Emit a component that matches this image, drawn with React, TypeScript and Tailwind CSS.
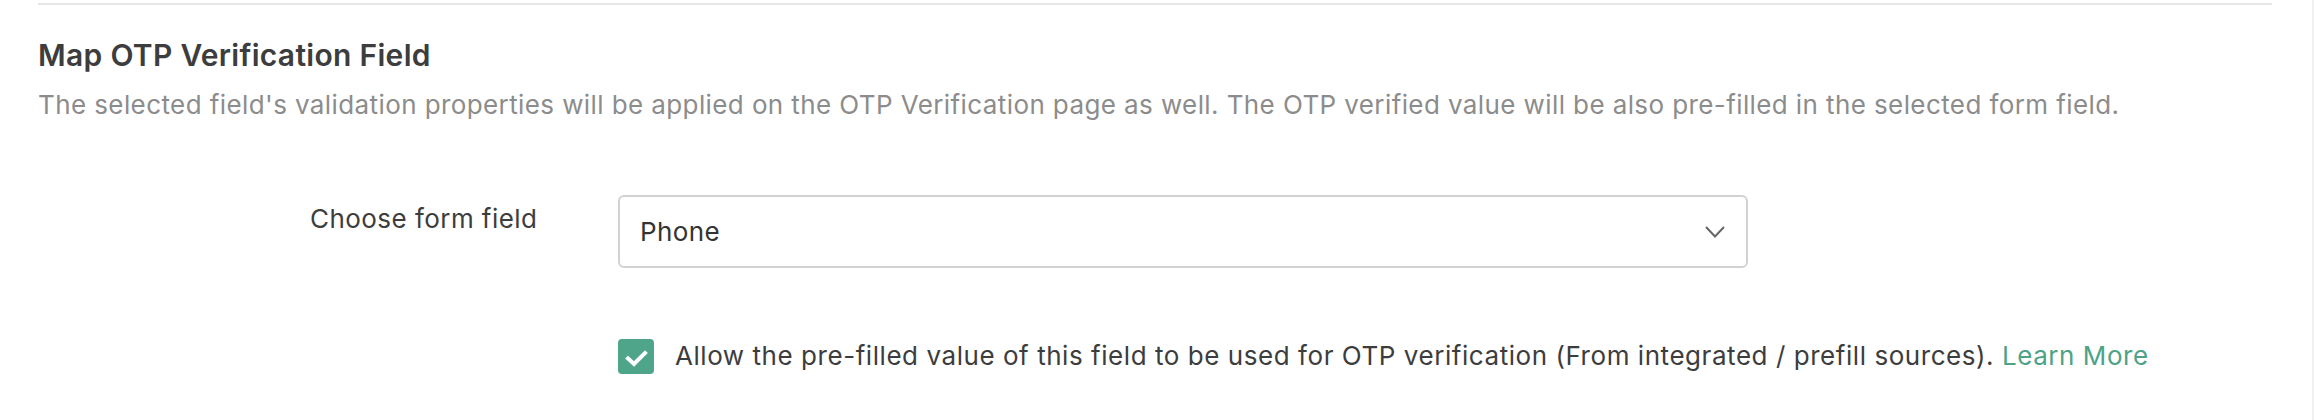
export default function App() {
  return (
    <div className="w-full h-[420px] bg-white border-r-2 border-[#f0f0f0] font-['Inter',sans-serif] antialiased">
      <div className="pl-[38px] pr-[40px] pt-[3px]">
        <div className="h-[2px] bg-[#e6e6e6]" />

        <h2 className="mt-[30px] text-[30px] leading-[40px] font-semibold tracking-[0.3px] text-[#3d3d3d]">
          Map OTP Verification Field
        </h2>
        <p className="mt-[12px] text-[26px] leading-[36px] tracking-[0.4px] text-[#8c8c8c]">
          The selected field's validation properties will be applied on the OTP Verification page as well. The OTP verified value will be also pre-filled in the selected form field.
        </p>

        <div className="mt-[72px] flex pl-[272px]">
          <label className="w-[308px] pt-[4px] text-[26px] leading-[40px] tracking-[0.45px] text-[#3d3d3d]">
            Choose form field
          </label>
          <button className="w-[1130px] h-[73px] flex items-center justify-between pl-[20px] pr-[21px] border-2 border-[#d2d2d2] rounded-[6px] bg-white text-[26px] tracking-[0.4px] text-[#333333]">
            <span>Phone</span>
            <svg width="20" height="12" viewBox="0 0 20 12">
              <polyline points="1,1 10,10.5 19,1" fill="none" stroke="#666666" strokeWidth="2" />
            </svg>
          </button>
        </div>

        <div className="mt-[70px] pl-[580px] flex items-center gap-[21px]">
          <span className="w-[36px] h-[35px] shrink-0 rounded-[4px] bg-[#4fa58a] flex items-center justify-center">
            <svg width="36" height="35" viewBox="0 0 36 35">
              <polyline
                points="10,19.5 16,25 27,14"
                fill="none"
                stroke="#ffffff"
                strokeWidth="4"
                strokeLinecap="square"
              />
            </svg>
          </span>
          <span className="text-[26px] leading-[36px] tracking-[0.55px] text-[#3d3d3d]">
            Allow the pre-filled value of this field to be used for OTP verification (From integrated / prefill sources).{' '}
            <a className="text-[#4da287]">Learn More</a>
          </span>
        </div>
      </div>
    </div>
  );
}
